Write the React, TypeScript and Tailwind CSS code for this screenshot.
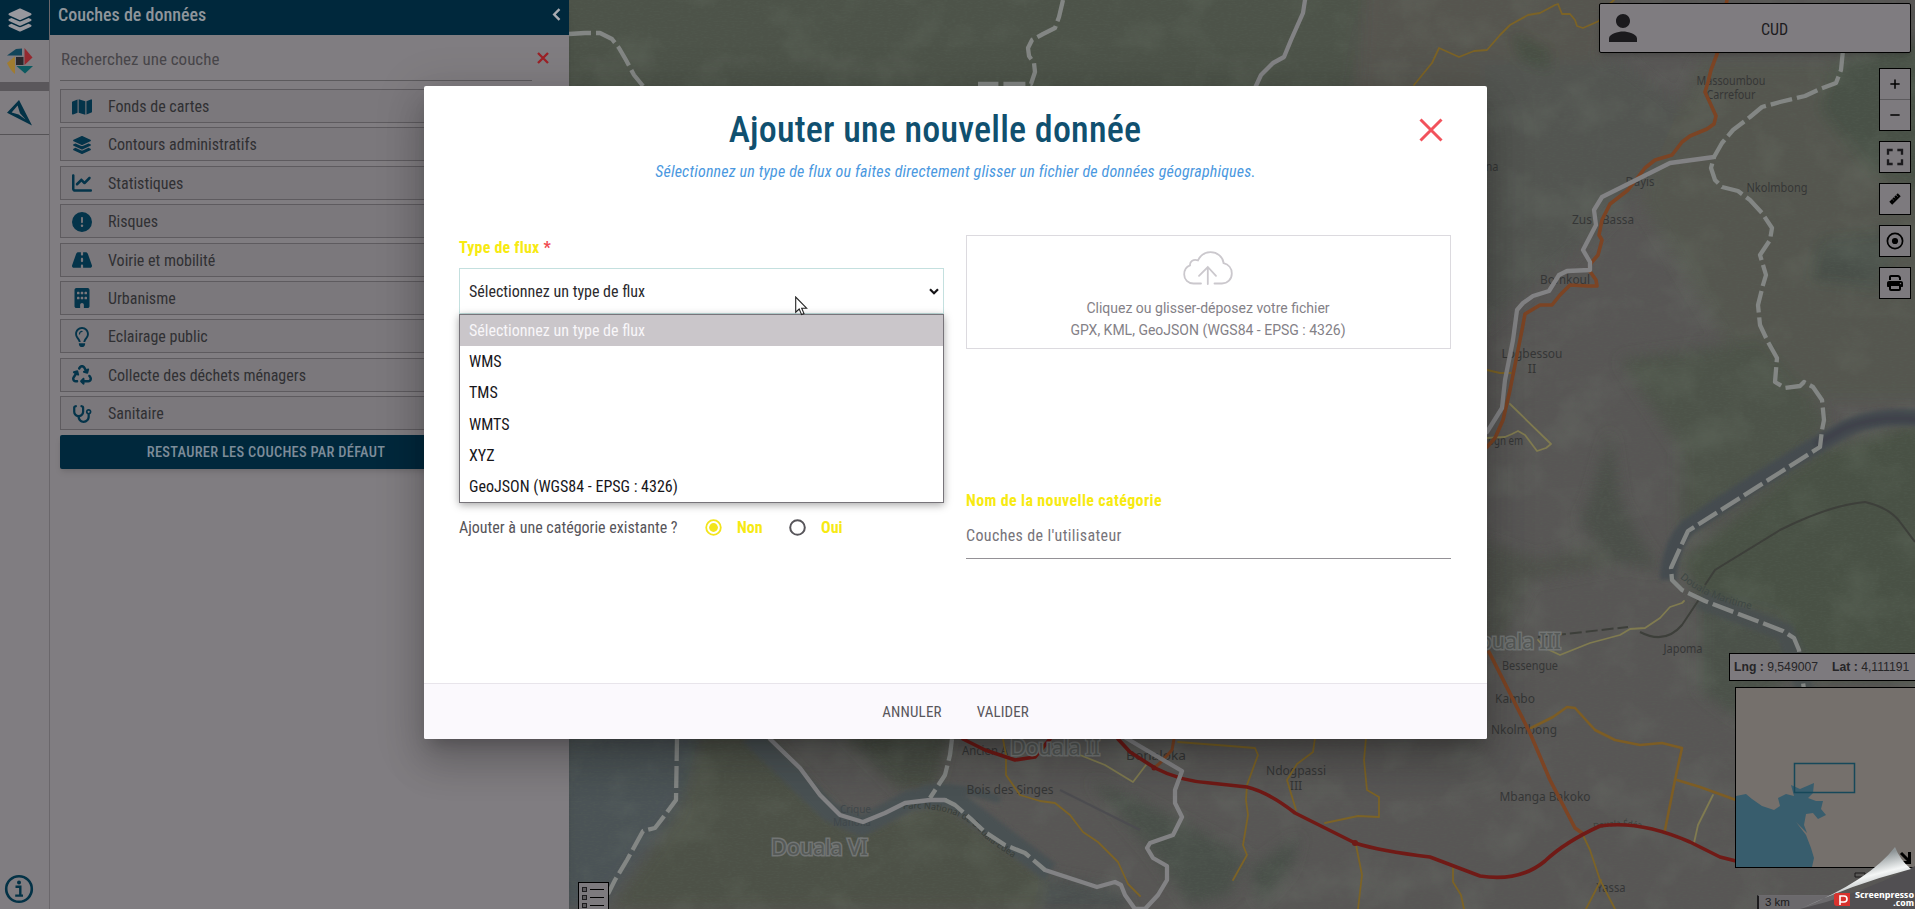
import React from 'react';
import {
  FaLayerGroup,
  FaMap,
  FaChartLine,
  FaCircleExclamation,
  FaRoad,
  FaBuilding,
  FaRegLightbulb,
  FaRecycle,
  FaStethoscope,
  FaPlus,
  FaMinus,
  FaPrint,
} from 'react-icons/fa6';
import { MdPerson, MdFullscreen } from 'react-icons/md';

const categories = [
  { label: 'Fonds de cartes', icon: FaMap },
  { label: 'Contours administratifs', icon: FaLayerGroup },
  { label: 'Statistiques', icon: FaChartLine },
  { label: 'Risques', icon: FaCircleExclamation },
  { label: 'Voirie et mobilité', icon: FaRoad },
  { label: 'Urbanisme', icon: FaBuilding },
  { label: 'Eclairage public', icon: FaRegLightbulb },
  { label: 'Collecte des déchets ménagers', icon: FaRecycle },
  { label: 'Sanitaire', icon: FaStethoscope },
];

const flowTypes = ['WMS', 'TMS', 'WMTS', 'XYZ', 'GeoJSON (WGS84 - EPSG : 4326)'];

const yellowRoads = [
  '1414,85 1432,63 1439,48 1459,57 1474,51 1487,50 1500,35 1510,25 1528,15 1540,13 1555,5 1558,4 1562,14 1570,14 1575,20 1577,26 1583,28 1599,21 1605,8 1614,0',
  '1003,739 1006,755 1006,775 1020,795 1040,801 1055,803 1070,815 1083,832 1098,842 1118,862 1128,884 1140,896',
  '1178,742 1230,746 1255,748 1258,755 1247,785 1246,800 1248,815 1243,845 1247,855 1233,880',
  '1315,738 1313,752 1297,764 1287,780 1293,800 1296,810',
  '1366,738 1364,760 1367,790 1379,797 1379,817 1358,816 1325,823',
  '1356,845 1362,875 1358,909',
  '1453,867 1453,882 1461,895 1464,909',
  '1582,833 1590,850 1600,880 1615,909',
  '1601,880 1586,909',
  '1487,370 1500,373 1511,373',
];

const wideYellowRoads = [
  '1531,728 1553,717 1567,707 1575,708 1595,730 1615,740 1640,745 1662,743 1682,748 1675,780 1665,830',
  '1677,780 1700,787 1736,800',
];

const paleRoads = [
  '1510,404 1551,444 1546,448 1537,451 1525,435 1518,431 1512,434 1505,437 1487,438',
  '1684,601 1682,603 1670,607 1660,618 1645,628 1630,629 1620,635 1590,643 1560,655 1545,648 1538,640',
  '1713,795 1698,825 1694,843',
  '1080,755 1105,765 1133,782 1146,765',
];

const dashedBorders = [
  '569,34 585,33 600,33 612,39 619,48 626,60 634,75 643,86',
  '1063,0 1059,17 1055,28 1043,34 1032,40 1028,48 1029,56 1034,63 1035,72 1031,84 978,84',
  '1843,50 1841,70 1836,83 1820,89 1805,96 1780,102 1762,107 1750,117 1733,130 1722,143 1714,157 1711,168 1715,180 1722,187 1738,191 1750,200 1762,213 1772,228 1770,240 1760,255 1766,275 1763,285 1758,305 1760,325 1768,342 1777,358 1775,382 1785,388 1800,386 1804,382 1813,387 1822,400 1824,420 1822,430 1820,447 1688,531 1680,548 1671,568 1672,580 1682,590 1705,601 1783,631 1794,638 1799,650 1804,690',
  '677,739 676,800 665,815 655,828 643,831 627,860 615,880 608,894',
  '952,739 950,755 945,775 930,798',
  '945,800 955,805 970,818 985,832 1005,845 1025,853 1045,870',
];

const solidBorders = [
  '1305,0 1303,13 1291,40 1284,57 1273,63 1261,75 1255,88',
  '1714,157 1670,163 1650,173 1610,193 1602,197 1594,210 1596,225 1583,250 1590,262 1590,270 1567,271 1559,275 1549,291 1533,296 1523,303 1517,310 1513,340 1505,380 1502,408 1487,432',
  '770,739 800,768 820,795 840,815 863,822 885,813 905,803 930,800 945,800',
  '1045,870 1097,887 1115,882 1121,885 1125,895 1135,909 1145,909 1158,895 1167,880 1167,866 1153,858 1147,848 1150,843 1173,835 1182,817 1175,803 1175,790 1182,771 1126,738',
];

const places: { t: string; x: number; y: number; w?: number }[] = [
  { t: 'Massoumbou', x: 1731, y: 85, w: 69 },
  { t: 'Carrefour', x: 1731, y: 99, w: 49 },
  { t: 'Dayis', x: 1640, y: 186, w: 29 },
  { t: 'Nkolmbong', x: 1777, y: 192, w: 61 },
  { t: 'Zus', x: 1582, y: 224, w: 20 },
  { t: 'Bassa', x: 1618, y: 224, w: 32 },
  { t: 'Bomkoul', x: 1565, y: 284, w: 50 },
  { t: 'Logbessou', x: 1532, y: 358, w: 61 },
  { t: 'II', x: 1532, y: 373 },
  { t: 'Logn em', x: 1503, y: 445, w: 40 },
  { t: 'na', x: 1492, y: 171, w: 13 },
  { t: 'Japoma', x: 1683, y: 653, w: 39 },
  { t: 'Bessengue', x: 1530, y: 670, w: 56 },
  { t: 'Kambo', x: 1515, y: 703, w: 40 },
  { t: 'Nkolmbong', x: 1524, y: 734, w: 66 },
  { t: 'Mbanga Bakoko', x: 1545, y: 801, w: 91 },
  { t: 'Yassa', x: 1611, y: 892, w: 29 },
  { t: 'Ndogpassi', x: 1296, y: 775, w: 60 },
  { t: 'III', x: 1296, y: 790 },
  { t: 'Bonaloka', x: 1156, y: 760, w: 60 },
  { t: 'Bois des Singes', x: 1010, y: 794, w: 87 },
  { t: 'Ancien A', x: 985, y: 755, w: 46 },
];

function MapCanvas() {
  return (
    <svg className="block h-[909px] w-[1915px]" viewBox="0 0 1915 909">
      <defs>
        <filter id="soft" x="-20%" y="-20%" width="140%" height="140%">
          <feGaussianBlur stdDeviation="7" />
        </filter>
        <filter id="river" x="-5%" y="-5%" width="110%" height="110%">
          <feGaussianBlur stdDeviation="2" />
        </filter>
        <filter id="terrain" x="0" y="0" width="100%" height="100%">
          <feTurbulence type="fractalNoise" baseFrequency="0.018 0.022" numOctaves="5" seed="8" />
          <feColorMatrix values="0 0 0 0 0.24  0 0 0 0 0.29  0 0 0 0 0.23  0 2.6 0 0 -1.25" />
        </filter>
        <filter id="grain" x="0" y="0" width="100%" height="100%">
          <feTurbulence type="fractalNoise" baseFrequency="0.25 0.7" numOctaves="2" seed="3" />
          <feColorMatrix values="0 0 0 0 0.1  0 0 0 0 0.13  0 0 0 0 0.1  0 1.2 0 0 -0.52" />
        </filter>
        <path id="park" d="M903 809 Q960 805 985 838 Q1000 850 1026 866" />
        <path id="axis" d="M1594 829 Q1620 823 1645 829" />
        <path id="dibamba" d="M1680 578 Q1705 600 1755 610" />
      </defs>
      <rect width="1915" height="909" fill="#585655" />
      <g filter="url(#soft)">
        <path d="M540 -20H1366L1350 120H540Z" fill="#4d5349" />
        <path d="M1366 -20H1620L1600 60L1500 150H1350Z" fill="#56554f" />
        <path d="M1480 60H1620L1700 120L1600 230L1480 330Z" fill="#535451" />
        <path d="M1700 60H1930V400H1760L1700 300L1640 200Z" fill="#55564f" />
        <path d="M1835 60L1925 40V190L1870 170L1820 110Z" fill="#485146" />
        <path d="M1620 360L1760 340L1830 420L1790 470L1680 540L1680 450Z" fill="#4d524a" />
        <path d="M1820 450L1925 420V680H1810L1790 630L1700 600L1680 560Z" fill="#485144" />
        <path d="M1700 590L1780 610L1810 660L1740 720L1700 690Z" fill="#4c5149" />
        <path d="M1590 500L1610 430L1620 500L1640 540L1660 570L1610 560L1580 520Z" fill="#4b5049" />
        <path d="M1480 540L1540 560L1590 545L1620 565L1530 580L1500 650H1480Z" fill="#4f514c" />
        <path d="M1510 30L1550 50L1550 70L1520 60Z" fill="#465043" />
        <path d="M1820 240L1900 230L1880 290L1810 280Z" fill="#495048" />
        <path d="M550 730H720L670 820L600 909H550Z" fill="#4b5356" />
        <path d="M700 730L760 730L850 830L940 800L1040 870L1080 909H610L680 810Z" fill="#4d5147" />
        <path d="M840 730H950L935 790L900 790Z" fill="#484d45" />
        <path d="M1090 780L1140 800L1245 855L1230 895L1190 905L1150 850Z" fill="#4a4f48" />
        <path d="M1250 870L1300 835L1290 870L1260 905Z" fill="#48504a" />
        <path d="M1045 875L1120 890L1130 909H1040Z" fill="#494e4d" />
      </g>
      <rect x="569" width="1346" height="909" filter="url(#terrain)" opacity="0.16" />
      <rect x="569" width="1346" height="909" filter="url(#grain)" opacity="0.5" />
      <g filter="url(#river)" fill="none" strokeLinejoin="round">
        <path d="M1920 418Q1870 414 1840 432Q1780 465 1688 527Q1670 545 1668 580" stroke="#454c50" strokeWidth="17" />
        <path d="M1920 420Q1880 414 1845 428L1815 445" stroke="#40434b" strokeWidth="8" />
        <path d="M1700 600L1785 632L1805 690" stroke="#494f50" strokeWidth="18" />
        <path d="M750 735L830 812L862 826L910 800L950 796L1050 872" stroke="#4a5153" strokeWidth="20" />
        <path d="M920 790Q950 782 1000 800" stroke="#4a5153" strokeWidth="8" />
      </g>
      <g fill="none" stroke="#3d3f3a" strokeWidth="2">
        <path d="M1705 585L1715 570L1780 530Q1830 505 1865 502Q1890 508 1900 522L1915 542" />
        <path d="M1538 637L1628 627" strokeDasharray="12 4" />
        <path d="M1640 632Q1665 645 1682 625L1700 598" />
        <path d="M1060 790L1140 830" stroke="#4c4c50" />
      </g>
      <g
        fontFamily="Noto Sans, sans-serif"
        fontSize="12.5"
        fill="#353636"
        textAnchor="middle"
      >
        {places.map((p, i) => (
          <text key={i} x={p.x} y={p.y} textLength={p.w} lengthAdjust="spacingAndGlyphs">
            {p.t}
          </text>
        ))}
      </g>
      <g fontFamily="Noto Sans, sans-serif" fontSize="10" fill="#383d38">
        <text fontSize="9">
          <textPath href="#park">Parc National de Douala-Edéa</textPath>
        </text>
        <text fontSize="8">
          <textPath href="#axis">Douala-Édéa</textPath>
        </text>
        <text fontSize="10" fill="#3e4744">
          <textPath href="#dibamba">Douala Maritime</textPath>
        </text>
        <text x="840" y="813" fill="#40474a">Crique</text>
        <text x="833" y="826" fill="#40474a">Manoka</text>
      </g>
      <g fill="none" strokeLinejoin="round" strokeLinecap="round">
        <g stroke="#7c6326" strokeWidth="1.8">
          {yellowRoads.map((p) => <polyline key={p} points={p} />)}
        </g>
        <g stroke="#7d5d24" strokeWidth="2.6">
          {wideYellowRoads.map((p) => <polyline key={p} points={p} />)}
        </g>
        <g stroke="#807b50" strokeWidth="1.8">
          {paleRoads.map((p) => <polyline key={p} points={p} />)}
        </g>
        <g stroke="#7c4424" strokeWidth="3.6">
          <polyline points="1727,0 1717,54 1711,70 1708,82 1705,92 1711,105 1716,116 1714,124 1707,129 1690,136 1682,142 1672,155 1655,160 1645,168 1628,190 1610,204 1602,220 1599,235 1602,240 1598,255 1591,263 1589,270 1596,280 1597,286 1588,286 1570,285 1560,295 1552,305 1540,305 1535,308 1525,314 1522,330 1510,390 1503,420 1495,438 1487,447" />
          <polyline points="1489,652 1530,733 1550,780 1575,828 1582,833" />
          <polyline points="1174,739 1172,750 1160,763 1154,768" strokeWidth="3" />
        </g>
        <g stroke="#701a16" strokeWidth="3.6">
          <path d="M1118 739L1130 752L1155 768Q1180 781 1210 783L1247 787Q1268 792 1295 813L1325 828L1355 843Q1380 851 1430 857L1480 876Q1520 882 1545 861Q1565 842 1600 826Q1640 820 1690 842L1720 857L1736 861" />
          <path d="M963 739L985 750L1015 760L1035 757L1050 739" />
        </g>
        <circle cx="1154" cy="768" r="2.5" fill="#701a16" stroke="none" />
        <circle cx="1355" cy="843" r="3" fill="#701a16" stroke="none" />
        <g stroke="#828284" strokeWidth="4.3">
          {solidBorders.map((p) => <polyline key={p} points={p} />)}
        </g>
        <g stroke="#838684" strokeWidth="4.3" strokeDasharray="22 5" strokeLinecap="butt">
          {dashedBorders.map((p) => <polyline key={p} points={p} />)}
        </g>
      </g>
      <g
        fontFamily="Noto Sans, sans-serif"
        fontSize="22"
        fill="#555957"
        stroke="#727574"
        strokeWidth="3"
        paintOrder="stroke"
      >
        <text x="771" y="855" textLength="97">Douala VI</text>
        <text x="1010" y="755" textLength="90">Douala II</text>
        <text x="1463" y="649" textLength="98">Douala III</text>
      </g>
    </svg>
  );
}

function ToolButton({ children }: { children: React.ReactNode }) {
  return (
    <button className="flex h-8 w-8 items-center justify-center border border-black bg-[#7d7a7e] text-black">
      {children}
    </button>
  );
}

function MapTools() {
  return (
    <div className="absolute right-1 top-[3px] flex flex-col items-end">
      <div className="flex h-[50px] w-[312px] items-center rounded-xs border border-black bg-[#7f7c80] shadow-md">
        <div className="flex w-[46px] justify-center">
          <MdPerson size={42} color="#1b1a1d" />
        </div>
        <div className="flex-1 pr-[7px] pt-[3px] text-center text-base text-[#1c1b1e]">CUD</div>
      </div>
      <div className="mt-[15px] flex flex-col items-end gap-[10px]">
        <div className="flex h-[63px] w-8 flex-col border border-black bg-[#7d7a7e] text-black">
          <div className="flex flex-1 items-center justify-center border-b border-[#5c5a5d]">
            <FaPlus size={12} />
          </div>
          <div className="flex flex-1 items-center justify-center">
            <FaMinus size={12} />
          </div>
        </div>
        <ToolButton>
          <MdFullscreen size={28} color="#1b1a1d" />
        </ToolButton>
        <ToolButton>
          <svg width="12" height="12" viewBox="0 0 12 12">
            <path d="M8.8 0.3L11.7 3.2L3.2 11.7L0.3 8.8Z" fill="#000" />
            <path d="M7.2 2.2l1.4 1.4M5.2 4.2l1 1M3.4 6l1.2 1.2" stroke="#7d7a7e" strokeWidth=".8" />
          </svg>
        </ToolButton>
        <ToolButton>
          <svg width="18" height="18" viewBox="0 0 18 18">
            <circle cx="9" cy="9" r="7.6" fill="none" stroke="#000" strokeWidth="1.7" />
            <circle cx="9" cy="9" r="3.1" fill="#000" />
          </svg>
        </ToolButton>
        <ToolButton>
          <FaPrint size={16} />
        </ToolButton>
      </div>
    </div>
  );
}

function MapInsets() {
  return (
    <div className="absolute bottom-0 right-0 flex flex-col items-end">
      <div
        className="flex h-7 w-[186px] items-center gap-[14px] whitespace-nowrap border border-r-0 border-black bg-[#7d7a7e] pl-1 pt-px text-[12.2px] text-[#262527]"
        style={{ fontFamily: 'Liberation Sans, Arial, sans-serif' }}
      >
        <span><b>Lng :</b> 9,549007</span>
        <span><b>Lat :</b> 4,111191</span>
      </div>
      <div className="mt-[6px] h-[181px] w-[180px] border border-r-0 border-black bg-[#75706c]">
        <svg width="179" height="179" viewBox="0 0 179 179">
          <path
            d="M0 108L10 106L16 111L26 118L38 122L44 118L42 110L50 106L58 108L55 97L64 101L78 95L77 105L72 110L80 113L87 113L85 121L90 127L82 131L77 125L70 126L68 137L71 145L60 134L70 147L75 160L78 170L76 179H0Z"
            fill="#385d6d"
          />
          <rect x="58.5" y="75.5" width="60" height="29" fill="none" stroke="#16485a" strokeWidth="1.5" />
        </svg>
      </div>
      <div className="mt-[27px] flex h-[14px] w-[158px] items-center border-l-2 border-t border-l-[#1d1c1e] border-t-[#6d6b6e] bg-[#6b696c] pl-[6px] text-[11.5px] leading-[13px] text-[#1a191b]">
        <span style={{ fontFamily: 'Liberation Sans, Arial, sans-serif' }}>3 km</span>
      </div>
    </div>
  );
}

function PageCurl() {
  return (
    <svg className="absolute bottom-0 right-0" width="120" height="66" viewBox="1795 843 120 66">
      <defs>
        <linearGradient id="curl" x1="0.55" y1="0.2" x2="0.8" y2="0.75">
          <stop offset="0" stopColor="#8e9597" />
          <stop offset="0.45" stopColor="#f4f6f6" />
          <stop offset="1" stopColor="#8b9294" />
        </linearGradient>
      </defs>
      <path d="M1855 873h10v4h-10z" fill="none" stroke="#1a191b" />
      <path d="M1800 909Q1855 896 1911 868L1915 866V909Z" fill="#514f52" />
      <path d="M1901 853l8 8M1909.5 852v10.5H1899" stroke="#000" strokeWidth="3" fill="none" />
      <path d="M1800 909Q1870 880 1895 847Q1900 860 1911 869Q1850 885 1800 909Z" fill="url(#curl)" />
      <path d="M1837 893h13v13h-13a3 3 0 0 1-3-3v-7a3 3 0 0 1 3-3z" fill="#d8322e" />
      <path d="M1840 905v-9h4a3 3 0 0 1 0 6h-3.5" fill="none" stroke="#fff" strokeWidth="1.6" />
      <g fontFamily="Open Sans, sans-serif" fontWeight="700" fontSize="8" fill="#fff">
        <text x="1855" y="897.5" textLength="59" lengthAdjust="spacingAndGlyphs">Screenpresso</text>
        <text x="1893" y="905.5" textLength="21" lengthAdjust="spacingAndGlyphs">.com</text>
      </g>
    </svg>
  );
}

function IconRail() {
  return (
    <nav className="flex w-[49px] flex-col items-start bg-[#807d81]">
      <div className="flex h-10 w-full items-center bg-[#00283c] pl-[7px] text-[#98989e]">
        <FaLayerGroup size={26} />
      </div>
      <div className="flex h-[42px] w-full items-center pl-[7px]">
        <svg width="26" height="26" viewBox="0 0 26 26">
          <path d="M0 7.5L9 1L15 0.5V7.5Z" fill="#12455a" />
          <path d="M17.5 0L25.5 9.5L17.5 17Z" fill="#94292f" />
          <path d="M0 15L8 8.5V26Q3 22 0 15Z" fill="#a07c30" />
          <path d="M9.5 18H26L18 25.5Z" fill="#0c5a60" />
          <rect x="9" y="9" width="7.5" height="8" fill="#29282c" />
        </svg>
      </div>
      <div className="h-[9px] w-full bg-[#5a575b]" />
      <div className="flex h-[44px] w-full items-center border-b border-[#555356] pl-[7px]">
        <svg width="26" height="26" viewBox="0 0 26 26">
          <path d="M12 0L0 12.8L25 25.5Z M10.6 5.4L13 13.2L18.6 19.6L11.6 14.6L4.6 12.4Z" fill="#033246" fillRule="evenodd" />
        </svg>
      </div>
      <div className="mt-auto mb-[5px] pl-1">
        <svg width="30" height="30" viewBox="0 0 30 30">
          <circle cx="15" cy="15" r="12.8" fill="none" stroke="#033246" strokeWidth="2.6" />
          <circle cx="15" cy="8.6" r="2" fill="#033246" />
          <path d="M11.5 12.8H16.3V21M11.2 21.6H19" fill="none" stroke="#033246" strokeWidth="2.4" />
        </svg>
      </div>
    </nav>
  );
}

function LayersPanel() {
  return (
    <aside className="flex w-[520px] flex-col border-l border-[#6a676b] bg-[#807d81]">
      <header className="flex h-[35px] items-start justify-between bg-[#00283c] px-2 pt-[3px] text-[18px] font-medium leading-6 text-[#8f959b]">
        <span>Couches de données</span>
        <svg className="mt-[5px]" width="9" height="13" viewBox="0 0 9 13">
          <path d="M7.5 1.2L2.2 6.5L7.5 11.8" fill="none" stroke="#a9acb2" strokeWidth="2.4" />
        </svg>
      </header>
      <div className="flex flex-col pl-[10px] pr-[36px]">
        <div className="flex h-[47px] items-start">
          <div className="h-[46px] w-[472px] shrink-0 border-b border-[#5c5a5d] pl-px pt-3 text-[17px] leading-6 text-[#474549]">
            Recherchez une couche
          </div>
          <svg className="ml-[5px] mt-[17px] shrink-0" width="12" height="12" viewBox="0 0 12 12">
            <path d="M1 1L11 11M11 1L1 11" stroke="#9c2126" strokeWidth="2.3" />
          </svg>
        </div>
        <div className="mt-[7px] flex w-[496px] flex-col gap-[4.4px]">
          {categories.map(({ label, icon: Icon }) => (
            <div
              key={label}
              className="flex h-[34px] items-center border border-[#5e5b5f] bg-[#7b787c] pt-px text-base text-[#303033]"
            >
              <div className="flex w-[42px] justify-center text-[#04344a]">
                <Icon size={20} />
              </div>
              <span className="ml-[5px] pt-px">{label}</span>
            </div>
          ))}
        </div>
        <button className="mt-[5px] flex h-[34px] w-[412px] items-center justify-center rounded-xs bg-[#00283c] pt-[2px] text-[14.5px] font-medium tracking-[0.25px] text-[#7d8c99] shadow-md">
          RESTAURER LES COUCHES PAR DÉFAUT
        </button>
      </div>
    </aside>
  );
}

function FlowSelect() {
  return (
    <div className="flex flex-col">
      <label className="pt-px text-base font-bold leading-6 tracking-[0.2px] text-[#f7ea12]">
        Type de flux <span className="text-[#f04a50]">*</span>
      </label>
      <div className="relative mt-2">
        <div className="flex h-[46px] items-center justify-between border border-[#c4e0df] bg-white pl-[9px] pr-1 text-base text-[#2b2a2d]">
          <span className="pt-px">Sélectionnez un type de flux</span>
          <svg width="10" height="7" viewBox="0 0 10 7">
            <path d="M1 1.2L5 5.2L9 1.2" fill="none" stroke="#151416" strokeWidth="2.2" />
          </svg>
        </div>
        <ul className="absolute inset-x-0 top-[46px] z-10 border border-[#77747a] bg-white text-base text-[#17161a] shadow-[0_2px_8px_rgba(0,0,0,0.35)]">
          <li className="flex h-[31.2px] items-center bg-[#cac6ca] pl-[9px] pt-px text-[#f8f6f9]">
            Sélectionnez un type de flux
          </li>
          {flowTypes.map((type) => (
            <li key={type} className="flex h-[31.2px] items-center pl-[9px] pt-px">{type}</li>
          ))}
        </ul>
        <svg className="absolute left-[336px] top-[28px] z-20" width="13" height="20" viewBox="0 0 13 20">
          <path d="M0.7 1V16.2L4.2 13L6.6 18.6L9 17.6L6.7 12.2H11.6Z" fill="#fff" stroke="#222" strokeWidth="1.1" />
        </svg>
      </div>
    </div>
  );
}

function DropZone() {
  return (
    <div className="flex h-[114px] flex-col items-center border border-[#dcdadf] pr-px pt-[15px] text-[#848187]">
      <svg width="50" height="34" viewBox="0 0 50 34" fill="none" stroke="#cbc8cd" strokeWidth="1.8" strokeLinecap="round">
        <path d="M18 32.5H10.5C5 32.5 1.2 28.5 1.2 23.4C1.2 19 3.8 15.6 7 14.4C6.6 10.4 10.5 7.6 15 9.4C17.5 4.2 22 1.2 27.5 1.2C34.5 1.2 40 6 40.6 12.2C45.5 13.4 48.8 17.4 48.8 22.4C48.8 28.4 44.5 32.5 39 32.5H31.5" />
        <path d="M24.8 33V16.2M16 24.8L24.8 16L33 24.8" />
      </svg>
      <p className="mt-[12px] text-center text-sm leading-[22px] font-stretch-normal">
        Cliquez ou glisser-déposez votre fichier
        <br />
        GPX, KML, GeoJSON (WGS84 - EPSG : 4326)
      </p>
    </div>
  );
}

function AddDataDialog() {
  return (
    <section className="flex h-[653px] w-[1063px] flex-col rounded-xs bg-white shadow-[0_11px_15px_-7px_rgba(0,0,0,0.2),0_24px_38px_3px_rgba(0,0,0,0.14),0_9px_46px_8px_rgba(0,0,0,0.12)]">
      <div className="flex items-center pl-[27px] pr-[44px] pt-[22px]">
        <h1 className="flex-1 text-center text-[36px] font-medium leading-[44px] tracking-[0.2px] text-[#10506f]">
          Ajouter une nouvelle donnée
        </h1>
        <button>
          <svg width="24" height="24" viewBox="0 0 24 24">
            <path d="M1.5 1.5L22.5 22.5M22.5 1.5L1.5 22.5" stroke="#f2525c" strokeWidth="3" />
          </svg>
        </button>
      </div>
      <p className="mt-2 text-center text-base italic leading-6 tracking-[0.17px] text-[#4a98e0]">
        Sélectionnez un type de flux ou faites directement glisser un fichier de données géographiques.
      </p>
      <div className="mt-[51px] grid grid-cols-2 grid-rows-[254px_auto] gap-x-[22px] pl-[35px] pr-9">
        <FlowSelect />
        <DropZone />
        <div className="flex items-center self-start pt-[27px] text-base leading-6 text-[#57555a]">
          <span className="w-[246px]">Ajouter à une catégorie existante ?</span>
          <svg className="relative -top-px" width="17" height="17" viewBox="0 0 17 17">
            <circle cx="8.5" cy="8.5" r="7.3" fill="none" stroke="#f3e51c" strokeWidth="1.8" />
            <circle cx="8.5" cy="8.5" r="4.4" fill="#f3e51c" />
          </svg>
          <b className="ml-[15px] w-[52px] text-[#f7ea12]">Non</b>
          <svg className="relative -top-px" width="17" height="17" viewBox="0 0 17 17">
            <circle cx="8.5" cy="8.5" r="7.3" fill="none" stroke="#57555a" strokeWidth="2" />
          </svg>
          <b className="ml-[15px] text-[#f7ea12]">Oui</b>
        </div>
        <div className="flex flex-col">
          <label className="text-base font-bold leading-6 tracking-[0.35px] text-[#f7ea12]">
            Nom de la nouvelle catégorie
          </label>
          <div className="mt-[11px] h-[35px] border-b border-[#949196] text-base leading-6 tracking-[0.35px] text-[#77747a]">
            Couches de l'utilisateur
          </div>
        </div>
      </div>
      <footer className="mt-auto flex h-[56px] items-center justify-center gap-[35px] rounded-b-xs border-t border-[#e8e5eb] bg-[#fbf9fd] pt-px text-[15px] text-[#59575c]">
        <button className="tracking-[0.2px]">ANNULER</button>
        <button className="tracking-[0.1px]">VALIDER</button>
      </footer>
    </section>
  );
}

export default function App() {
  return (
    <div
      className="relative h-[909px] w-[1915px] overflow-hidden bg-[#585655] font-stretch-semi-condensed"
      style={{ fontFamily: 'Roboto, sans-serif' }}
    >
      <div className="absolute inset-0">
        <MapCanvas />
      </div>
      <MapTools />
      <MapInsets />
      <div className="absolute bottom-0 left-[578px] flex h-[27px] w-[31px] flex-col gap-[3px] border border-b-0 border-black bg-[#7d7a7e] px-[3px] pt-1">
        {[0, 1, 2].map((i) => (
          <div key={i} className="flex items-center gap-[3px]">
            <span className="h-[5px] w-[5px] border border-[#1d1c1e] bg-[#5c5a5d]" />
            <span className="h-[1.5px] w-[14px] bg-black" />
          </div>
        ))}
      </div>
      <div className="relative flex h-full w-[569px] shadow-lg">
        <IconRail />
        <LayersPanel />
      </div>
      <div className="absolute inset-0 flex items-start pl-[424px] pt-[86px]">
        <AddDataDialog />
      </div>
      <PageCurl />
    </div>
  );
}
